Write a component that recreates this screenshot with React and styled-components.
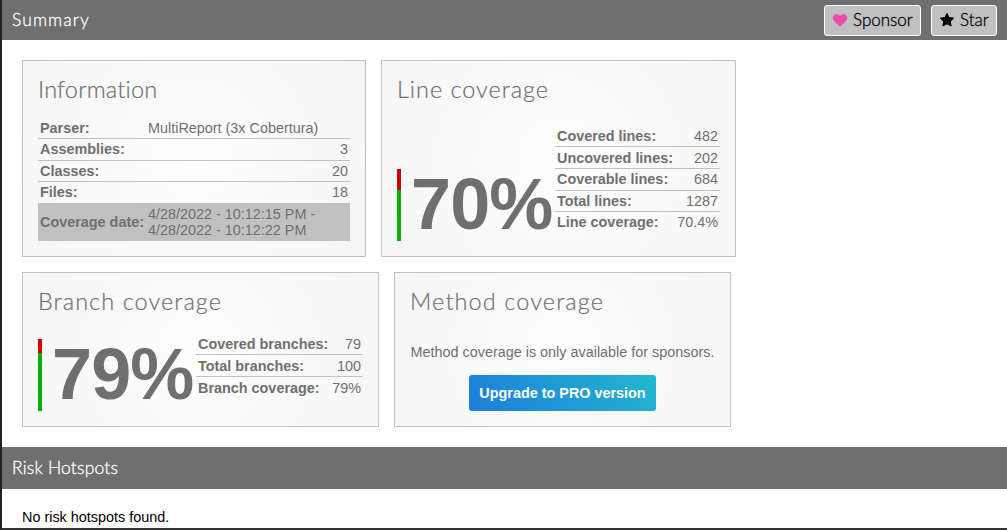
import React from "react";
import styled, { createGlobalStyle } from "styled-components";

const GlobalStyle = createGlobalStyle`
  * { box-sizing: border-box; }
  body {
    margin: 0;
    background: #fff;
    font-family: "Liberation Sans", Arial, sans-serif;
    font-size: 14.4px;
    overflow: hidden;
  }
`;

const Page = styled.div`
  width: 1007px;
  height: 530px;
  border-left: 2px solid #242224;
  border-bottom: 2px solid #353335;
  overflow: hidden;
`;

const Bar = styled.header`
  display: flex;
  align-items: center;
  justify-content: space-between;
  height: ${(p) => p.$height}px;
  padding: 0 10px;
  background: #6f6f6f;
  color: #fff;
`;

const BarTitle = styled.h1`
  margin: 0;
  font: 300 17.5px/24px "Century Gothic", Lato, sans-serif;
  -webkit-text-stroke: 0.3px currentColor;
  letter-spacing: ${(p) => p.$spacing}px;
`;

const Buttons = styled.div`
  display: flex;
  gap: 10px;
`;

const BarButton = styled.a`
  display: flex;
  align-items: center;
  width: ${(p) => p.$width}px;
  height: 31px;
  padding-left: 7px;
  gap: 5px;
  border: 1px solid #fff;
  border-radius: 3px;
  background: #c0c0c0;
  color: #000;
  font: 300 17px/24px "Century Gothic", Lato, sans-serif;
  -webkit-text-stroke: 0.3px currentColor;
  letter-spacing: ${(p) => p.$spacing}px;
  white-space: nowrap;
  svg { flex: none; }
`;

const Cards = styled.main`
  display: flex;
  flex-direction: column;
  gap: 15px;
  height: 407px;
  padding: 20px;
`;

const CardRow = styled.div`
  display: flex;
  gap: 15px;
`;

const Card = styled.section`
  width: ${(p) => p.$width}px;
  height: ${(p) => p.$height}px;
  padding: 15px;
  border: 1px solid #c1c1c1;
  background: radial-gradient(circle, #fefefe, #f6f6f6);
  color: #6f6f6f;
`;

const CardTitle = styled.h2`
  margin: 0;
  height: 27px;
  font: 300 23.5px/26px "Century Gothic", Lato, sans-serif;
  -webkit-text-stroke: 0.2px currentColor;
  letter-spacing: ${(p) => p.$spacing}px;
  white-space: nowrap;
`;

const InfoTable = styled.div`
  margin-top: 15px;
`;

const Row = styled.div`
  display: flex;
  align-items: center;
  justify-content: space-between;
  height: ${(p) => p.$height || 22}px;
  padding: 0 2px ${(p) => p.$lift || 0}px;
  border-bottom: ${(p) => (p.$last ? "0" : "1px solid #c1c1c1")};
  line-height: 16px;
  white-space: nowrap;
`;

const HighlightRow = styled(Row)`
  background: #c1c1c1;
`;

const Label = styled.span`
  font-weight: 700;
`;

const InfoValue = styled.span`
  width: 200px;
`;

const Coverage = styled.div`
  display: flex;
  align-items: flex-end;
  height: ${(p) => p.$height}px;
  margin-top: ${(p) => p.$top}px;
`;

const Meter = styled.div`
  flex: none;
  width: 4px;
  height: 72px;
  background: linear-gradient(#c00 ${(p) => p.$red}px, #0aad0a ${(p) => p.$red}px);
`;

const Percentage = styled.div`
  flex: none;
  width: 144px;
  margin-left: 10px;
  font-size: 72px;
  font-weight: 700;
  line-height: 70px;
  height: 72px;
  letter-spacing: -0.9px;
`;

const Stats = styled.div`
  width: ${(p) => p.$width}px;
  align-self: flex-start;
`;

const Sponsors = styled.div`
  display: flex;
  flex-direction: column;
  align-items: center;
  margin-top: 29px;
  line-height: 16px;
  white-space: nowrap;
`;

const ProButton = styled.a`
  width: 187px;
  height: 36px;
  margin-top: 15px;
  border-radius: 3px;
  background: linear-gradient(50deg, #1c7ddb, #23b8cf);
  color: #fff;
  font-weight: 700;
  line-height: 36px;
  text-align: center;
`;

const Message = styled.p`
  margin: 0;
  padding: 20px 20px 0;
  line-height: 16px;
  color: #000;
`;

const Heart = () => (
  <svg width="16" height="16" viewBox="0 0 16 16" fill="#ea4aaa">
    <path d="M8 14.7 2 8.900C.6 7.400.5 4.900 1.800 3.400 3.400 1.600 6.200 1.700 8 3.800c1.800-2.100 4.600-2.200 6.200-.4 1.300 1.500 1.200 4-.2 5.500z" />
  </svg>
);

const Star = () => (
  <svg width="16" height="16" viewBox="0 0 16 16" fill="#000">
    <path
      d="M8 1.400l2 4.100 4.600.7-3.300 3.200.8 4.600L8 11.800 3.900 14l.8-4.600L1.400 6.200 6 5.500z"
      stroke="#000"
      strokeWidth="1"
      strokeLinejoin="round"
    />
  </svg>
);

const StatRows = ({ rows }) =>
  rows.map(([label, value, height, lift], i) => (
    <Row key={label} $height={height} $lift={lift} $last={i === rows.length - 1}>
      <Label>{label}</Label>
      <span>{value}</span>
    </Row>
  ));

const lineStats = [
  ["Covered lines:", "482", 22, 0],
  ["Uncovered lines:", "202", 22, 0],
  ["Coverable lines:", "684", 22, 1],
  ["Total lines:", "1287", 21, 0],
  ["Line coverage:", "70.4%", 21, 1],
];

const branchStats = [
  ["Covered branches:", "79", 22, 0],
  ["Total branches:", "100", 22, 0],
  ["Branch coverage:", "79%", 21, 0],
];

export default function App() {
  return (
    <Page>
      <GlobalStyle />
      <Bar $height={40}>
        <BarTitle $spacing={1.05}>Summary</BarTitle>
        <Buttons>
          <BarButton $width={97} $spacing={0}><Heart />Sponsor</BarButton>
          <BarButton $width={66} $spacing={0}><Star />Star</BarButton>
        </Buttons>
      </Bar>
      <Cards>
        <CardRow>
          <Card $width={344} $height={197}>
            <CardTitle $spacing={0.2}>Information</CardTitle>
            <InfoTable>
              <Row $height={21} $lift={1}>
                <Label>Parser:</Label>
                <InfoValue>MultiReport (3x Cobertura)</InfoValue>
              </Row>
              <Row $height={22} $lift={1}><Label>Assemblies:</Label><span>3</span></Row>
              <Row $height={21}><Label>Classes:</Label><span>20</span></Row>
              <Row $height={21} $lift={1} $last><Label>Files:</Label><span>18</span></Row>
              <HighlightRow $height={38} $last>
                <Label>Coverage date:</Label>
                <InfoValue>
                  4/28/2022 - 10:12:15 PM -<br />4/28/2022 - 10:12:22 PM
                </InfoValue>
              </HighlightRow>
            </InfoTable>
          </Card>
          <Card $width={355} $height={197}>
            <CardTitle $spacing={0.95}>Line coverage</CardTitle>
            <Coverage $top={22} $height={116}>
              <Meter $red={21} />
              <Percentage>70%</Percentage>
              <Stats $width={165}><StatRows rows={lineStats} /></Stats>
            </Coverage>
          </Card>
        </CardRow>
        <CardRow>
          <Card $width={357} $height={155}>
            <CardTitle $spacing={1.05}>Branch coverage</CardTitle>
            <Coverage $top={18} $height={78}>
              <Meter $red={14} />
              <Percentage>79%</Percentage>
              <Stats $width={167}><StatRows rows={branchStats} /></Stats>
            </Coverage>
          </Card>
          <Card $width={337} $height={155}>
            <CardTitle $spacing={1.1}>Method coverage</CardTitle>
            <Sponsors>
              <span>Method coverage is only available for sponsors.</span>
              <ProButton>Upgrade to PRO version</ProButton>
            </Sponsors>
          </Card>
        </CardRow>
      </Cards>
      <Bar $height={42}>
        <BarTitle $spacing={0.2}>Risk Hotspots</BarTitle>
      </Bar>
      <Message>No risk hotspots found.</Message>
    </Page>
  );
}
